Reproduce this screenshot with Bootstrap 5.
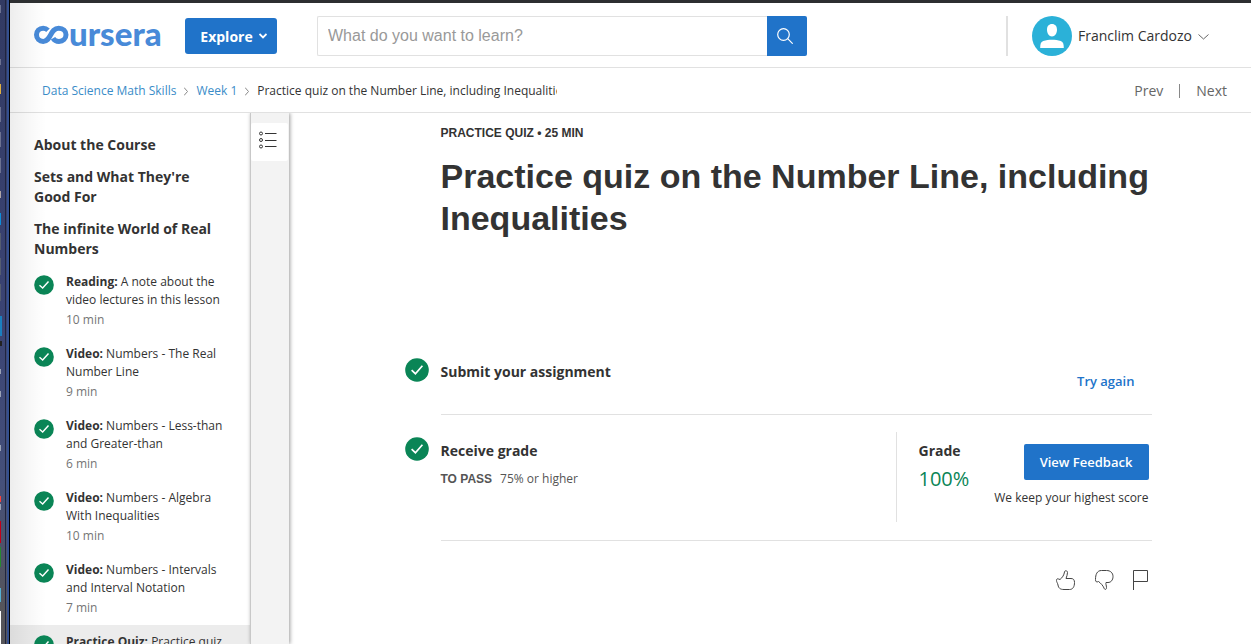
<!DOCTYPE html>
<html lang="en">
<head>
<meta charset="utf-8">
<meta name="viewport" content="width=device-width, initial-scale=1">
<title>Practice quiz on the Number Line, including Inequalities | Coursera</title>
<link href="https://cdn.jsdelivr.net/npm/bootstrap@5.3.0/dist/css/bootstrap.min.css" rel="stylesheet">
<style>
  body { font-family: "Open Sans", "Noto Sans", sans-serif; font-size: 14px; line-height: 20px; color: #333; background: #fff; }
  a { text-decoration: none; }
  svg { display: block; flex-shrink: 0; }
  button { line-height: 20px; }

  /* edge of the desktop dock on the left */
  .dock { width: 10px; flex-shrink: 0; background: linear-gradient(#323a63, #3b4474 50%, #45507a 75%, #56555a 95%); border-right: 1px solid #000; position: relative; overflow: hidden; }
  .dock-rim { position: absolute; top: 0; bottom: 0; right: 0; width: 4px; border-left: 1px solid #20253f; border-right: 2px solid #34508f; }
  .dock svg { position: absolute; left: 0; top: 0; }
  .window { min-width: 0; border-top: 3px solid #2d2f31; position: relative; }
  .window-shade { position: absolute; left: 0; top: 0; bottom: 0; width: 36px; background: linear-gradient(90deg, rgba(0,0,0,.07), rgba(0,0,0,.03) 50%, transparent); pointer-events: none; z-index: 3; }

  .topbar { height: 65px; flex-shrink: 0; padding: 2px 42px 0 24px; border-bottom: 1px solid #e1e1e1; }
  .brand { color: #488ad8; width: 127px; height: 36px; margin-right: 24px; }
  .brand-word { font: 900 33px/36px Lato, sans-serif; padding-bottom: 6px; }
  .blue-btn { background: #2073c9; border: 0; color: #fff; height: 36px; border-radius: 2px; font-weight: 600; --bs-btn-hover-bg: #1b62ab; --bs-btn-hover-color: #fff; }
  .explore { font-size: 14px; font-weight: 700; width: 92px; border-radius: 3px; gap: 6px; padding: 0 0 0 5px; }
  .search { width: 490px; height: 40px; margin-left: 40px; }
  .search input { border: 1px solid #e1e1e1; border-right: 0; border-radius: 2px 0 0 2px; font: 16px/20px "Liberation Sans", sans-serif; padding: 0 10px; color: #333; }
  .search input::placeholder { color: #999; }
  .search button { width: 40px; height: 40px; padding: 0 4px 0 0; border-radius: 0 2px 2px 0; }
  .account { border: 0; border-left: 2px solid #e1e1e1; background: none; height: 40px; padding: 0 0 0 24px; color: #333; gap: 6px; }
  .crumbs { height: 45px; padding: 2px 24px 0 32px; border-bottom: 1px solid #e1e1e1; font-size: 12px; }
  .crumbs ol { width: 515px; min-width: 0; }
  .crumbs a { color: #3a8cc8; }
  .crumbs .pager { font-size: 14px; color: #666; }
  .pager-rule { width: 1px; height: 14px; background: #888; }

  .outline { width: 240px; flex-shrink: 0; padding-top: 22px; overflow: hidden; }
  .outline h2 { font-size: 14px; line-height: 20px; font-weight: 700; margin: 0 24px 12px; }
  .outline h2.opened { margin-bottom: 6px; }
  .lesson { display: flex; gap: 12px; padding: 8px 24px; font-size: 12px; line-height: 18px; color: #333; }
  .lesson:hover { color: #333; background: #f5f5f5; }
  .lesson.current { background: #ececec; }
  .lesson svg { margin-top: 2px; }
  .mins { color: #757575; margin-top: 2px; }
  .rail { width: 39px; flex-shrink: 0; background: #f3f3f3; border-left: 1px solid #c8c8c8; padding-top: 10px; box-shadow: 1px 0 4px rgba(0,0,0,.4); z-index: 1; }
  .rail button { width: 37px; height: 38px; border: 0; border-radius: 2px; background: #fff; padding: 0 0 4px 8px; }

  .quiz { max-width: 763px; padding-left: 16px; }
  .quiz-head { margin-left: 36px; padding-top: 10px; height: 235px; }
  .kicker { font: 700 12px/20px "Liberation Sans", sans-serif; margin: 0 0 12px; }
  h1 { font: 700 34px/42px "Liberation Sans", sans-serif; margin: 0; }
  .step { display: flex; gap: 12px; }
  .step > .done { margin-top: 10px; }
  .step > .graded { margin-top: 22px; }
  .step-body { flex: 1; border-bottom: 1px solid #e1e1e1; display: flex; justify-content: space-between; }
  .step h2 { font-size: 14px; line-height: 20px; font-weight: 700; margin: 0; }
  .submit { height: 67px; padding-top: 14px; }
  .submit a { font-size: 13px; font-weight: 600; color: #2073c9; margin: 9px 17px 0 0; }
  .receive { height: 126px; padding-top: 17px; }
  .receive-text { padding-top: 9px; }
  .pass { font-size: 12px; color: #555; margin-top: 8px; }
  .pass b { font-family: "Liberation Sans", sans-serif; margin-right: 8px; }
  .grade { width: 256px; height: 90px; border-left: 1px solid #e1e1e1; padding: 9px 3px 0 22px; }
  .score { font-size: 20px; line-height: 24px; color: #0a8556; margin-top: 6px; }
  .feedback { width: 125px; font-size: 13px; margin-top: 3px; padding: 1px 0 0; }
  .keep { font-size: 12px; line-height: 18px; margin-top: 9px; }
  .votes { padding: 28px 3px 0 0; gap: 17px; }
  .votes button { background: none; border: 0; padding: 0; }
</style>
</head>
<body>
<svg width="0" height="0" class="position-absolute" aria-hidden="true">
  <symbol id="done" viewBox="0 0 24 24"><circle cx="12" cy="12" r="11.8" fill="#0a8556"/><path d="M6.6 12.2l3.8 3.5 7-8" fill="none" stroke="#fff" stroke-width="1.7"/></symbol>
</svg>
<div class="d-flex vh-100 overflow-hidden">
  <div class="dock" aria-hidden="true">
    <svg width="3" height="644">
      <path fill="#6c7291" d="M0 5h1v8H0zM0 59h1v6H0zM0 107h1v15H0zM0 132h1v15H0zM0 158h1v15H0z"/>
      <path fill="#e0b040" d="M0 84h1v10H0z"/><path fill="#b0a6a6" d="M0 191h1v7H0z"/>
      <path fill="#0c8edb" d="M0 213h1v12H0z"/><path fill="#555d70" d="M0 233h1v17H0zM0 258h1v17H0zM0 284h1v17H0z"/>
      <path fill="#1a80c0" d="M0 316h2v20H0z"/><path fill="#222" d="M0 341h2v5H0z"/>
      <path fill="#9ba3b6" d="M0 369h1v5H0zM0 391h1v6H0zM0 445h1v6H0zM0 504h1v6H0z"/>
      <path fill="#ff4038" d="M0 496h1v6H0z"/><path fill="#c4001a" d="M0 521h1v22H0z"/>
      <path fill="#268a30" d="M0 547h1v20H0z"/><path fill="#53b0d4" d="M0 588h1v14H0z"/><path fill="#fff" d="M0 611h1v33H0z"/>
    </svg>
    <div class="dock-rim"></div>
  </div>
  <div class="window d-flex flex-column flex-fill">
    <div class="window-shade"></div>
    <header class="topbar d-flex align-items-center">
      <a href="#" class="brand d-flex align-items-center flex-shrink-0" aria-label="Coursera">
        <svg width="35" height="36" viewBox="0 0 35 36" fill="none" stroke="currentColor" stroke-width="5"><path d="M14 12.300C12.500 10.800 11 10.200 9.200 10.200c-3.900 0-6.700 2.800-6.700 6.600s2.800 6.600 6.700 6.600c8 0 6.800-13.200 15.500-13.200 4.400 0 7.300 2.800 7.300 6.600s-2.900 6.600-7 6.600c-2.800 0-4.800-1.200-6-3.200"/></svg>
        <span class="brand-word">ursera</span>
      </a>
      <button type="button" class="btn blue-btn explore d-flex align-items-center justify-content-center flex-shrink-0">Explore
        <svg width="8" height="6" viewBox="0 0 8 6"><path d="M.5 1L4 4.500 7.500 1" fill="none" stroke="#fff" stroke-width="1.800"/></svg>
      </button>
      <form class="search d-flex" role="search">
        <input type="search" class="form-control" aria-label="What do you want to learn?" placeholder="What do you want to learn?">
        <button type="button" class="btn blue-btn d-flex align-items-center justify-content-center flex-shrink-0" aria-label="Search">
          <svg width="16" height="16" viewBox="0 0 16 16" fill="none" stroke="#fff" stroke-width="1.200"><circle cx="6.500" cy="6.500" r="5.800"/><path d="M10.700 10.700l5 5"/></svg>
        </button>
      </form>
      <button type="button" class="account d-flex align-items-center ms-auto text-nowrap">
        <svg width="40" height="40" viewBox="0 0 40 40"><circle cx="20" cy="20" r="20" fill="#2bb1d8"/><path fill="#fff" d="M20 8c3.200 0 5 2.200 5 5.700 0 3.600-2 6.700-5 6.700s-5-3.100-5-6.700C15 10.200 16.800 8 20 8zM8.200 32c0-3.800.6-6 3-6.900 2.800-1 5.800-1.300 8.800-1.300s6 .3 8.800 1.300c2.400.9 3 3.100 3 6.900z"/></svg>
        <span>Franclim Cardozo</span>
        <svg width="11" height="8" viewBox="0 0 11 8"><path d="M.5 2.500l5 4.500 5-4.500" fill="none" stroke="#666"/></svg>
      </button>
    </header>
    <nav class="crumbs d-flex align-items-center justify-content-between flex-shrink-0" aria-label="Course">
      <ol class="list-unstyled d-flex align-items-center mb-0 overflow-hidden text-nowrap">
        <li><a href="#">Data Science Math Skills</a></li>
        <li class="px-2"><svg width="4" height="9" viewBox="0 0 4 9"><path d="M0 .5l3.500 4L0 8.500" fill="none" stroke="#888"/></svg></li>
        <li><a href="#">Week 1</a></li>
        <li class="px-2"><svg width="4" height="9" viewBox="0 0 4 9"><path d="M0 .5l3.500 4L0 8.500" fill="none" stroke="#888"/></svg></li>
        <li class="overflow-hidden">Practice quiz on the Number Line, including Inequalities</li>
      </ol>
      <div class="pager d-flex align-items-center gap-3">
        <a href="#" class="pager">Prev</a><span class="pager-rule"></span><a href="#" class="pager">Next</a>
      </div>
    </nav>
    <div class="d-flex flex-fill overflow-hidden">
      <aside class="outline">
        <h2>About the Course</h2>
        <h2>Sets and What They're Good For</h2>
        <h2 class="opened">The infinite World of Real Numbers</h2>
        <a href="#" class="lesson"><svg width="20" height="20"><use href="#done"/></svg><div><b>Reading:</b> A note about the video lectures in this lesson<div class="mins">10 min</div></div></a>
        <a href="#" class="lesson"><svg width="20" height="20"><use href="#done"/></svg><div><b>Video:</b> Numbers - The Real Number Line<div class="mins">9 min</div></div></a>
        <a href="#" class="lesson"><svg width="20" height="20"><use href="#done"/></svg><div><b>Video:</b> Numbers - Less-than and Greater-than<div class="mins">6 min</div></div></a>
        <a href="#" class="lesson"><svg width="20" height="20"><use href="#done"/></svg><div><b>Video:</b> Numbers - Algebra With Inequalities<div class="mins">10 min</div></div></a>
        <a href="#" class="lesson"><svg width="20" height="20"><use href="#done"/></svg><div><b>Video:</b> Numbers - Intervals and Interval Notation<div class="mins">7 min</div></div></a>
        <a href="#" class="lesson current" aria-current="page"><svg width="20" height="20"><use href="#done"/></svg><div><b>Practice Quiz:</b> Practice quiz</div></a>
      </aside>
      <div class="rail">
        <button type="button" aria-label="Toggle outline">
          <svg width="18" height="18" viewBox="0 0 18 18" fill="none" stroke="#333"><circle cx="2" cy="2.500" r="1.500"/><circle cx="2" cy="9" r="1.500"/><circle cx="2" cy="15.500" r="1.500"/><path d="M6 2.500h11.500M6 9.500h11.500M6 15.500h11.500"/></svg>
        </button>
      </div>
      <main class="flex-fill">
        <div class="quiz mx-auto">
          <div class="quiz-head">
            <p class="kicker">PRACTICE QUIZ • 25 MIN</p>
            <h1>Practice quiz on the Number Line, including Inequalities</h1>
          </div>
          <section class="step">
            <svg class="done" width="24" height="24"><use href="#done"/></svg>
            <div class="step-body submit">
              <h2>Submit your assignment</h2>
              <a href="#">Try again</a>
            </div>
          </section>
          <section class="step">
            <svg class="graded" width="24" height="24"><use href="#done"/></svg>
            <div class="step-body receive">
              <div class="receive-text">
                <h2>Receive grade</h2>
                <div class="pass"><b>TO PASS</b>75% or higher</div>
              </div>
              <div class="grade d-flex justify-content-between">
                <div>
                  <h2>Grade</h2>
                  <div class="score">100%</div>
                </div>
                <div class="d-flex flex-column align-items-end">
                  <button type="button" class="btn blue-btn feedback">View Feedback</button>
                  <div class="keep">We keep your highest score</div>
                </div>
              </div>
            </div>
          </section>
          <div class="votes d-flex justify-content-end">
            <button type="button" aria-label="Like"><svg width="22" height="22" viewBox="0 0 22 22" fill="none" stroke="#444"><path d="M2.500 11.500c0-1.700.8-2 2-1.500l1.500.5C8.500 8.500 10 6 10.500 3c.3-2 3-1.500 3 .5 0 2-.8 4-1.500 6h5c2.500 0 3.500 1.500 3.500 4 0 4-1.500 7-5 7H10c-4 0-5.500-1.500-6-4.500-.4-2-1.500-3-1.500-4.500z"/></svg></button>
            <button type="button" aria-label="Dislike"><svg width="22" height="22" viewBox="0 0 22 22" fill="none" stroke="#444"><path d="M2.500 10.500c0-5 1.500-9 6-9h5c4 0 6.500 2.500 6.500 6s-2 6-5 6h-2c-.5 1.500.5 3 .5 5 0 2.500-2 2.500-2.500.500C10 16.500 7.500 14 5.500 12.500c-2 1-3 .3-3-2z"/></svg></button>
            <button type="button" aria-label="Flag"><svg width="17" height="22" viewBox="0 0 17 22" fill="none" stroke="#444"><path d="M1.500 21V1.500h14v11h-14"/></svg></button>
          </div>
        </div>
      </main>
    </div>
  </div>
</div>
<script src="https://cdn.jsdelivr.net/npm/bootstrap@5.3.0/dist/js/bootstrap.bundle.min.js"></script>
</body>
</html>
